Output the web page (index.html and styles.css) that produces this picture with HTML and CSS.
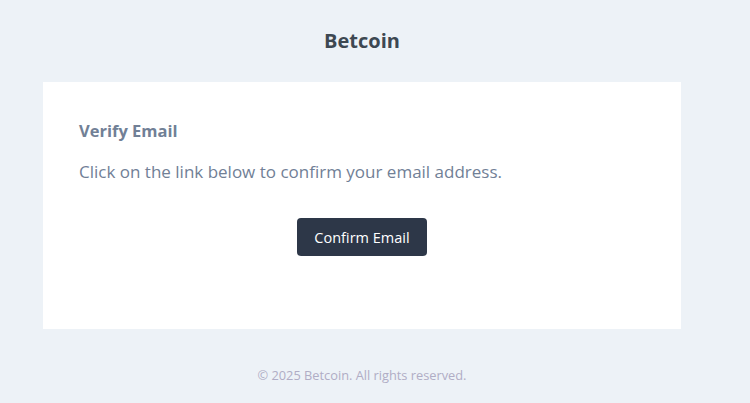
FILE: index.html
```html
<!DOCTYPE html>
<html>
<head>
<meta charset="utf-8">
<link rel="stylesheet" href="styles.css">
</head>
<body>
<div class="wrapper">
  <header class="header">Betcoin</header>
  <main class="card">
    <h1 class="heading">Verify Email</h1>
    <p class="text">Click on the link below to confirm your email address.</p>
    <div class="actions">
      <a class="button" href="#">Confirm Email</a>
    </div>
  </main>
  <footer class="footer">© 2025 Betcoin. All rights reserved.</footer>
</div>
</body>
</html>
```

FILE: styles.css
```css
html, body {
  margin: 0;
  padding: 0;
  background: #edf2f7;
  font-family: "Open Sans", "Noto Sans", sans-serif;
}
.wrapper {
  width: 724px;
  display: flex;
  flex-direction: column;
  align-items: center;
}
.header {
  height: 82px;
  display: flex;
  align-items: center;
  justify-content: center;
  font-size: 20px;
  font-weight: 700;
  color: #3d4852;
  box-sizing: border-box;
  padding-bottom: 2px;
}
.card {
  width: 638px;
  height: 247px;
  box-sizing: border-box;
  background: #ffffff;
  padding: 36px 36px 0 36px;
}
.heading {
  margin: 0;
  font-size: 16.5px;
  font-weight: 700;
  color: #718096;
  line-height: 26px;
}
.text {
  margin: 15px 0 0 0;
  font-size: 17px;
  line-height: 26px;
  color: #718096;
}
.actions {
  display: flex;
  justify-content: center;
  margin-top: 33px;
}
.button {
  display: flex;
  align-items: center;
  justify-content: center;
  width: 130px;
  height: 38px;
  border-radius: 4px;
  background: #2d3748;
  color: #ffffff;
  font-size: 14.5px;
  text-decoration: none;
}
.footer {
  margin-top: 36px;
  font-size: 12.8px;
  color: #b0adc5;
  line-height: 20px;
}
```
